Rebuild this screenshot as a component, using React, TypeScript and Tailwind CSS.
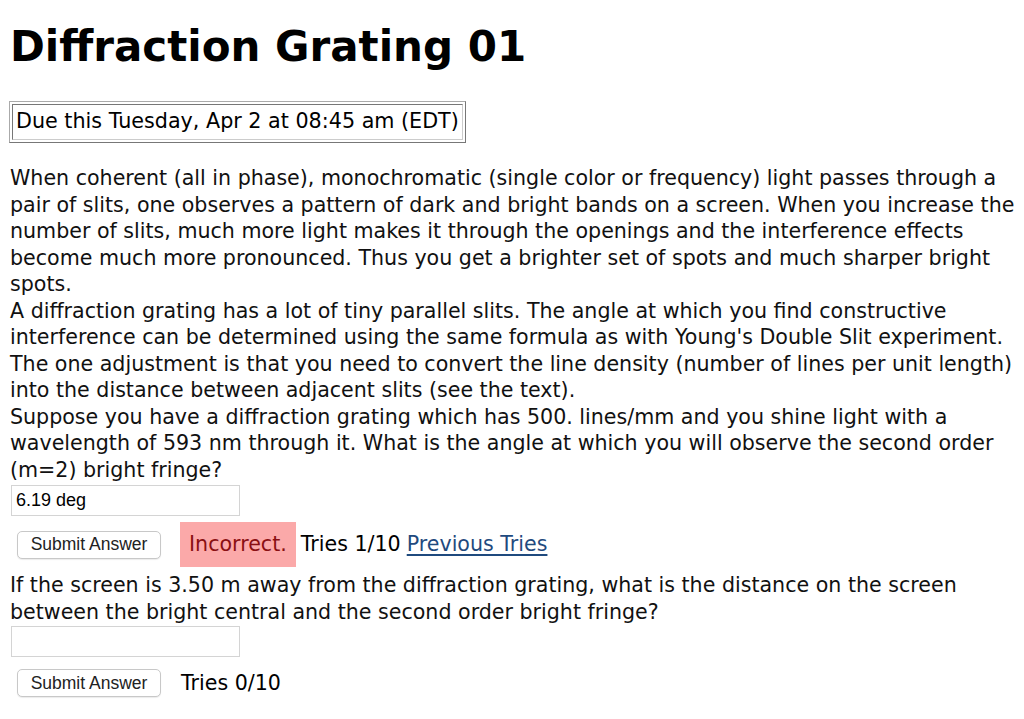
import React from 'react';

const body = { fontFamily: '"DejaVu Sans", Verdana, sans-serif' };
const ui = { fontFamily: '"Liberation Sans", Arial, sans-serif' };

function AnswerBox({ value }: { value?: string }) {
  return (
    <div className="ml-[11px] w-[229px] h-[31px] border border-[#d4d4d4] bg-white flex items-center px-[4px] text-[18px] text-black" style={ui}>
      {value}
    </div>
  );
}

function SubmitButton() {
  return (
    <div className="ml-[17px] w-[144px] h-[28px] border border-[#c8c8c8] rounded-[5px] bg-white shadow-[0_1px_1px_rgba(0,0,0,0.08)] flex items-center justify-center text-[17.5px] text-[#222]" style={ui}>
      Submit Answer
    </div>
  );
}

export default function App() {
  return (
    <div className="min-h-[719px] bg-white text-black" style={body}>
      <h1 className="pl-[10px] pt-[20px] text-[42px] font-bold leading-[54px]">Diffraction Grating 01</h1>

      <div className="mt-[27px] ml-[9px] w-fit border border-[#aaa] border-b-[#777] border-r-[#777] p-[2px]">
        <div className="border border-[#777] border-b-[#ccc] border-r-[#ccc] px-[3px] h-[36px] flex items-center text-[20.7px]">
          Due this Tuesday, Apr 2 at 08:45 am (EDT)
        </div>
      </div>

      <div className="mt-[22px] pl-[10px] pr-[4px] text-[20.6px] leading-[26.5px] text-[#111]">
        <p>
          When coherent (all in phase), monochromatic (single color or frequency) light passes through a pair of slits, one observes a pattern of dark and bright bands on a screen. When you increase the number of slits, much more light makes it through the openings and the interference effects become much more pronounced. Thus you get a brighter set of spots and much sharper bright spots.
        </p>
        <p>
          A diffraction grating has a lot of tiny parallel slits. The angle at which you find constructive interference can be determined using the same formula as with Young's Double Slit experiment. The one adjustment is that you need to convert the line density (number of lines per unit length) into the distance between adjacent slits (see the text).
        </p>
        <p>
          Suppose you have a diffraction grating which has 500. lines/mm and you shine light with a wavelength of 593 nm through it. What is the angle at which you will observe the second order (m=2) bright fringe?
        </p>
      </div>

      <div className="mt-[2px]">
        <AnswerBox value="6.19 deg" />
      </div>

      <div className="mt-[6px] flex items-center text-[20.6px]">
        <SubmitButton />
        <span className="ml-[19px] h-[45px] px-[9px] flex items-center bg-[#fba9a9] text-[#8a0f12]">Incorrect.</span>
        <span className="ml-[5px]">Tries 1/10</span>
        <span className="ml-[6px] text-[#1f4a7e] underline underline-offset-[3px]">Previous Tries</span>
      </div>

      <p className="mt-[5px] pl-[10px] pr-[4px] text-[20.6px] leading-[26.5px] text-[#111]">
        If the screen is 3.50 m away from the diffraction grating, what is the distance on the screen between the bright central and the second order bright fringe?
      </p>

      <div className="mt-[1px]">
        <AnswerBox />
      </div>

      <div className="mt-[11px] flex items-center text-[20.6px]">
        <SubmitButton />
        <span className="ml-[20px]">Tries 0/10</span>
      </div>
    </div>
  );
}
